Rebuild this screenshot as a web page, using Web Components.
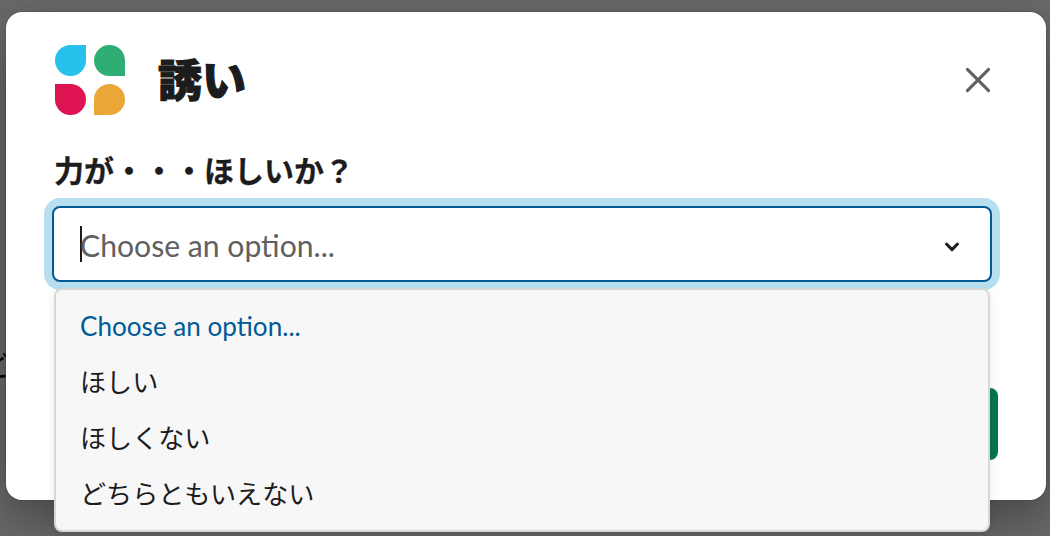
<!DOCTYPE html>
<html lang="ja">
<head>
<meta charset="utf-8">
<title>誘い</title>
<style>
    body {
        margin: 0;
        height: 536px;
        overflow: hidden;
        position: relative;
        background: #696969;
        color: #1d1c1d;
        font-family: Lato, "Noto Sans CJK JP", sans-serif;
    }
    .behind {
        position: absolute;
        left: -19px;
        top: 345px;
        font-size: 30px;
        line-height: 38px;
        color: #000;
    }
</style>
</head>
<body>
<span class="behind">ど</span>
<modal-dialog>
    <app-logo slot="icon"></app-logo>
    <span slot="title">誘い</span>
    <select-field label="力が・・・ほしいか？" placeholder="Choose an option...">
        <select-option selected>Choose an option...</select-option>
        <select-option>ほしい</select-option>
        <select-option>ほしくない</select-option>
        <select-option>どちらともいえない</select-option>
    </select-field>
    <submit-button slot="footer"></submit-button>
</modal-dialog>

<script>
class AppLogo extends HTMLElement {
    constructor() {
        super();
        this.attachShadow({ mode: 'open' }).innerHTML = `
            <style>
                :host { display: block; width: 70px; height: 70px; margin-left: 1px; }
                svg { display: block; }
            </style>
            <svg width="70" height="70" viewBox="0 0 70 70">
                <path fill="#28c0ec" d="M15.5 0H31V15.5A15.5 15.5 0 1 1 15.5 0Z"/>
                <path fill="#2eae75" d="M70 31H54A15.5 15.5 0 1 1 70 15.5Z"/>
                <path fill="#de1351" d="M0 39H15.5A15.5 15.5 0 1 1 0 54.5Z"/>
                <path fill="#eaa738" d="M39 70V54.5A15.5 15.5 0 1 1 54.5 70Z"/>
            </svg>
        `;
    }
}

class ModalDialog extends HTMLElement {
    constructor() {
        super();
        this.attachShadow({ mode: 'open' }).innerHTML = `
            <style>
                :host {
                    display: flex;
                    flex-direction: column;
                    position: relative;
                    box-sizing: border-box;
                    width: 1040px;
                    height: 488px;
                    margin: 12px 0 0 6px;
                    padding: 33px 48px 40px;
                    border-radius: 16px;
                    background: #fff;
                    box-shadow: 0 0 0 1px rgba(29, 28, 29, .13), 0 18px 48px rgba(0, 0, 0, .35);
                }
                header { display: flex; align-items: center; height: 70px; }
                h1 {
                    flex: 1;
                    margin: 0 0 0 33px;
                    font-size: 44px;
                    line-height: 60px;
                    font-weight: 900;
                    -webkit-text-stroke: 1.2px currentColor;
                }
                .close { display: block; margin-right: 6px; }
                main { flex: 1; margin-top: 34px; }
                footer { display: flex; justify-content: flex-end; }
            </style>
            <header>
                <slot name="icon"></slot>
                <h1><slot name="title"></slot></h1>
                <svg class="close" width="28" height="28" viewBox="0 0 28 28" fill="none" stroke="#616061" stroke-width="3" stroke-linecap="round">
                    <path d="M3.4 3.4 24.6 24.6M24.6 3.4 3.4 24.6"/>
                </svg>
            </header>
            <main><slot></slot></main>
            <footer><slot name="footer"></slot></footer>
        `;
    }
}

class SelectField extends HTMLElement {
    constructor() {
        super();
        this.attachShadow({ mode: 'open' }).innerHTML = `
            <style>
                :host { display: block; position: relative; }
                .label {
                    height: 45px;
                    line-height: 43px;
                    font-size: 30px;
                    font-weight: 700;
                    -webkit-text-stroke: .3px currentColor;
                }
                .control {
                    display: flex;
                    align-items: center;
                    box-sizing: border-box;
                    height: 76px;
                    margin: 12px 6px 0 -2px;
                    padding: 0 30px 0 26px;
                    border: 2px solid #005a96;
                    border-radius: 8px;
                    box-shadow: 0 0 0 8px #b8dff0;
                    background: #fff;
                }
                .caret { width: 2px; height: 36px; background: #1d1c1d; }
                .placeholder { flex: 1; margin-left: -2px; padding-top: 1px; font-size: 30.15px; line-height: 36px; color: #616061; }
                svg { margin-top: 5px; }
                .menu {
                    position: absolute;
                    left: 0;
                    right: 8px;
                    top: 139px;
                    box-sizing: border-box;
                    height: 244px;
                    padding: 8px 0;
                    border: 2px solid #d7d7d7;
                    border-radius: 8px;
                    background: #f7f7f7;
                    box-shadow: 0 4px 12px rgba(0, 0, 0, .08);
                }
            </style>
            <div class="label"></div>
            <div class="control">
                <span class="caret"></span>
                <span class="placeholder"></span>
                <svg width="16" height="12" viewBox="0 0 16 12" fill="none" stroke="#1d1c1d" stroke-width="3" stroke-linecap="round" stroke-linejoin="round">
                    <path d="M2.5 3 8 8.6 13.5 3"/>
                </svg>
            </div>
            <div class="menu"><slot></slot></div>
        `;
    }

    connectedCallback() {
        this.shadowRoot.querySelector('.label').textContent = this.getAttribute('label');
        this.shadowRoot.querySelector('.placeholder').textContent = this.getAttribute('placeholder');
    }
}

class SelectOption extends HTMLElement {
    constructor() {
        super();
        this.attachShadow({ mode: 'open' }).innerHTML = `
            <style>
                :host {
                    display: block;
                    height: 56px;
                    padding-left: 24px;
                    font-size: 26.1px;
                    line-height: 56px;
                }
                :host([selected]) { color: #005a96; }
            </style>
            <slot></slot>
        `;
    }
}

class SubmitButton extends HTMLElement {
    constructor() {
        super();
        this.attachShadow({ mode: 'open' }).innerHTML = `
            <style>
                :host {
                    display: block;
                    width: 160px;
                    height: 72px;
                    border-radius: 8px;
                    background: #067453;
                }
            </style>
        `;
    }
}

customElements.define('app-logo', AppLogo);
customElements.define('modal-dialog', ModalDialog);
customElements.define('select-field', SelectField);
customElements.define('select-option', SelectOption);
customElements.define('submit-button', SubmitButton);
</script>
</body>
</html>
